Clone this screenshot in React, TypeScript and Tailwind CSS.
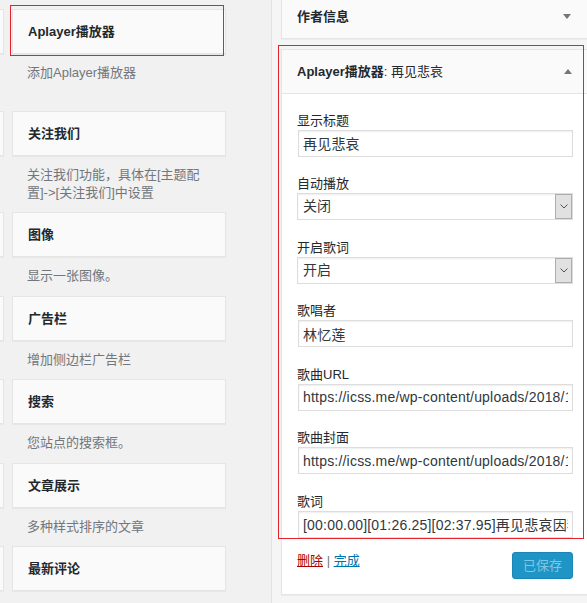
import React from 'react'

const font = { fontFamily: '"Liberation Sans", "Noto Sans CJK SC", sans-serif' }

interface AvailableWidget {
  title: string
  desc: string[]
  tall?: boolean
}

const available: AvailableWidget[] = [
  { title: 'Aplayer播放器', desc: ['添加Aplayer播放器'], tall: true },
  { title: '关注我们', desc: ['关注我们功能，具体在[主题配', '置]->[关注我们]中设置'], tall: true },
  { title: '图像', desc: ['显示一张图像。'] },
  { title: '广告栏', desc: ['增加侧边栏广告栏'] },
  { title: '搜索', desc: ['您站点的搜索框。'] },
  { title: '文章展示', desc: ['多种样式排序的文章'] },
  { title: '最新评论', desc: [] },
]

function Caret({ up }: { up?: boolean }) {
  return up ? (
    <div className="w-0 h-0 border-x-[4px] border-x-transparent border-b-[5px] border-b-[#72777c]" />
  ) : (
    <div className="w-0 h-0 border-x-[4px] border-x-transparent border-t-[5px] border-t-[#72777c]" />
  )
}

function TextField({ label, value }: { label: string; value: string }) {
  return (
    <div>
      <div className="text-[13px] leading-[19px] text-[#23282d]">{label}</div>
      <input
        readOnly
        value={value}
        style={font}
        className="block ml-[1px] w-[275px] h-[27px] border border-[#dddddd] bg-white pl-[4px] pr-[4px] text-[14px] tracking-[0.2px] text-[#32373c] shadow-[inset_0_1px_2px_rgba(0,0,0,0.07)] outline-none"
      />
    </div>
  )
}

function SelectField({ label, value }: { label: string; value: string }) {
  return (
    <div className="mt-[17.5px]">
      <div className="text-[13px] leading-[19px] text-[#23282d]">{label}</div>
      <div className="flex items-center w-[276px] h-[27px] border border-[#dddddd] bg-white shadow-[inset_0_1px_2px_rgba(0,0,0,0.07)]">
        <span className="flex-1 pl-[5px] text-[14px] text-[#32373c]">{value}</span>
        <div className="flex items-center justify-center w-[17px] h-[25px] bg-[#e1e1e1] border border-[#adadad]">
          <svg width="8" height="5" viewBox="0 0 8 5">
            <path d="M0.5 0.5 L4 4 L7.5 0.5" fill="none" stroke="#555" strokeWidth="1" />
          </svg>
        </div>
      </div>
    </div>
  )
}

export default function App() {
  return (
    <div style={font} className="relative flex w-[587px] h-[603px] overflow-hidden bg-[#f1f1f1]">
      {/* Available widgets */}
      <div className="w-[271px] shrink-0 pt-[9.3px]">
        {available.map((w) => (
          <div key={w.title} className="grid grid-cols-[4px_214px] gap-x-[8px]">
            <div className="h-[45px] border-y border-r border-[#e5e5e5] bg-[#fafafa] shadow-[0_1px_1px_rgba(0,0,0,0.04)]" />
            <div>
              <div className="flex items-center h-[45px] border border-[#e5e5e5] bg-[#fafafa] px-[15px] shadow-[0_1px_1px_rgba(0,0,0,0.04)]">
                <span className="text-[13px] font-bold text-[#23282d]">{w.title}</span>
              </div>
              <div
                className={`pt-[10px] pb-[10.5px] pr-[10px] text-[13px] leading-[18px] text-[#72777c] pl-[15px] ${
                  w.tall ? 'min-h-[56.5px]' : 'min-h-[38.5px]'
                }`}
              >
                {w.desc.map((d) => (
                  <div key={d}>{d}</div>
                ))}
              </div>
            </div>
          </div>
        ))}
      </div>

      {/* Sidebar */}
      <div className="flex-1 border-l border-[#e2e2e2] bg-[#f5f5f5] pl-[9px]">
        <div className="w-[308px]">
          <div className="-mt-[6px] flex items-center justify-between h-[45px] border border-[#e5e5e5] bg-[#fafafa] pl-[15px] pr-[17px] shadow-[0_1px_1px_rgba(0,0,0,0.04)]">
            <span className="text-[13px] font-bold text-[#23282d]">作者信息</span>
            <Caret />
          </div>

          <div className="mt-[10px] border border-[#e5e5e5] bg-white shadow-[0_1px_1px_rgba(0,0,0,0.04)]">
            <div className="flex items-center justify-between h-[44px] border-b border-[#e5e5e5] bg-[#fafafa] pl-[15px] pr-[16px]">
              <span className="text-[13px] text-[#23282d]">
                <span className="font-bold">Aplayer播放器</span>
                <span>: 再见悲哀</span>
              </span>
              <Caret up />
            </div>

            <div className="h-[444px] overflow-hidden px-[15px] pt-[16.5px]">
              <TextField label="显示标题" value="再见悲哀" />
              <SelectField label="自动播放" value="关闭" />
              <SelectField label="开启歌词" value="开启" />
              <div className="mt-[17.5px]">
                <TextField label="歌唱者" value="林忆莲" />
              </div>
              <div className="mt-[17.5px]">
                <TextField label="歌曲URL" value="https://icss.me/wp-content/uploads/2018/10/zaijianbeiai.mp3" />
              </div>
              <div className="mt-[17.5px]">
                <TextField label="歌曲封面" value="https://icss.me/wp-content/uploads/2018/10/zaijianbeiai.jpg" />
              </div>
              <div className="mt-[17.5px]">
                <TextField label="歌词" value="[00:00.00][01:26.25][02:37.95]再见悲哀因我不能" />
              </div>
            </div>

            <div className="flex items-start justify-between px-[15px] pt-[14px] pb-[15px]">
              <div className="text-[13px] leading-[18px]">
                <span className="text-[#a00] underline">删除</span>
                <span className="text-[#72777c]"> | </span>
                <span className="text-[#0073aa] underline">完成</span>
              </div>
              <button className="h-[27px] w-[61px] rounded-[3px] border border-[#1a86b8] bg-[#1f95c6] text-[13px] text-[#7fc6e5]">
                已保存
              </button>
            </div>
          </div>
        </div>
      </div>

      {/* Highlight marks */}
      <div className="pointer-events-none absolute left-[10px] top-[5px] w-[214px] h-[51px] border border-[#e3222b]" />
      <div className="pointer-events-none absolute left-[278px] top-[45px] w-[306px] h-[494px] border border-[#e3222b]" />
    </div>
  )
}
